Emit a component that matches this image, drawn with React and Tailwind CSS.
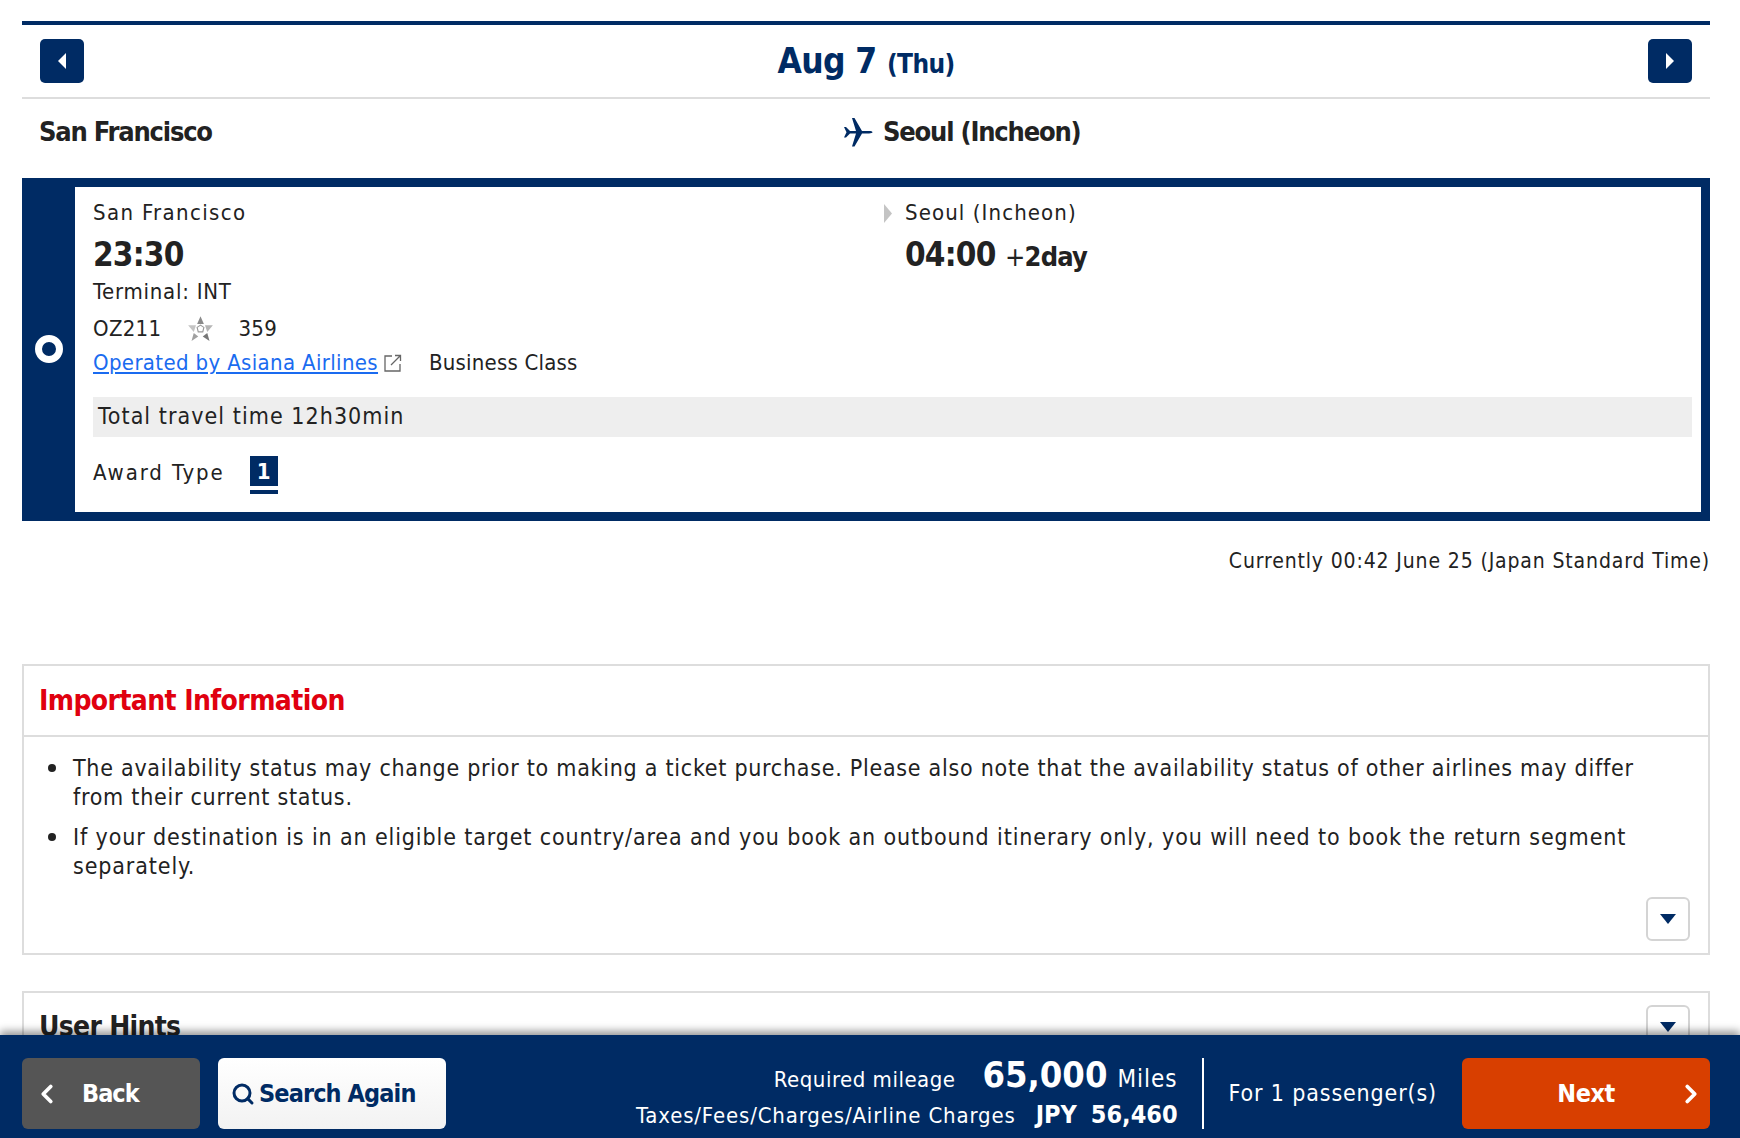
import React from "react";
import { ChevronLeft, ChevronRight, Search } from "lucide-react";

const Tri = ({ dir, className }) => {
  const points = {
    left: "9,0 9,16 1,8",
    right: "1,0 9,8 1,16",
  };
  return (
    <svg viewBox="0 0 10 16" className={className} fill="currentColor" preserveAspectRatio="none">
      <polygon points={points[dir]} />
    </svg>
  );
};

const ToggleButton = () => (
  <button className="w-[44px] h-[44px] rounded-[6px] border-2 border-[#d4d4d4] bg-white flex items-center justify-center shrink-0">
    <svg viewBox="0 0 16 10" className="w-[16px] h-[10px] text-[#002b64]" fill="currentColor">
      <polygon points="0,0 16,0 8,10" />
    </svg>
  </button>
);

const StarAlliance = () => (
  <svg viewBox="0 0 24 24" className="w-[27px] h-[27px]">
    <polygon points="12,1 15,8 9,8" fill="#8a8a8a" />
    <polygon points="16,9 23,9 18,15" fill="#b5b5b5" />
    <polygon points="18,16 20,23 14,19" fill="#777777" />
    <polygon points="10,19 4,23 6,16" fill="#a0a0a0" />
    <polygon points="1,9 8,9 6,15" fill="#c4c4c4" />
    <polygon points="12,9 15,11 14,15 10,15 9,11" fill="none" stroke="#999999" strokeWidth="1" />
  </svg>
);

const Plane = () => (
  <svg viewBox="0 0 30 30" className="w-[30px] h-[30px] text-[#002b64] mt-[-2px]" fill="currentColor">
    <path d="M1 10 L3 10 L7 14 L13 14 L9 1 L11.5 1 L19 14 L26 14 C28 14 29.5 14.6 29.5 15.2 C29.5 15.8 28 16.4 26 16.4 L19 16.4 L11.5 29.5 L9 29.5 L13 16.4 L7 16.4 L3 20.5 L1 20.5 L3.5 15.2 Z" />
  </svg>
);

const ExternalLink = () => (
  <svg viewBox="0 0 18 18" className="w-[18px] h-[18px] text-[#666666]" fill="none" stroke="currentColor" strokeWidth="1.3">
    <path d="M8 2 H1 V17 H16 V10" />
    <path d="M7 11 L16.5 1.5 M11 1.5 H16.5 V7" />
  </svg>
);

const Bullet = ({ children, className }) => (
  <li className="flex">
    <span className="w-[8px] h-[8px] mt-[10px] ml-[-25px] mr-[17px] rounded-full bg-[#222222] shrink-0" />
    <span className={className}>{children}</span>
  </li>
);

export default function App() {
  return (
    <div className="relative w-[1740px] h-[1138px] overflow-hidden bg-white text-[#222222] font-['DejaVu_Sans',sans-serif] [font-stretch:condensed]">
      <div className="pl-[22px] pr-[30px] pt-[21px]">
        {/* date */}
        <div className="border-t-4 border-b-2 border-t-[#002b64] border-b-[#dddddd] h-[78px] flex items-center justify-between px-[18px]">
          <button className="w-[44px] h-[44px] rounded-[5px] bg-[#002b64] text-white flex items-center justify-center">
            <Tri dir="left" className="w-[10px] h-[16px]" />
          </button>
          <div className="text-[#002b64] font-bold text-[35px] leading-none tracking-[-0.6px]">
            Aug 7 <span className="text-[26px]">(Thu)</span>
          </div>
          <button className="w-[44px] h-[44px] rounded-[5px] bg-[#002b64] text-white flex items-center justify-center">
            <Tri dir="right" className="w-[10px] h-[16px]" />
          </button>
        </div>

        {/* route */}
        <div className="h-[79px] pb-[12px] flex items-center pl-[17px] font-bold text-[27px] tracking-[-1.2px]">
          <div className="w-[804px]">San Francisco</div>
          <div className="flex items-center gap-[10px]">
            <Plane />
            <span>Seoul (Incheon)</span>
          </div>
        </div>

        {/* flight */}
        <div className="flex border-[9px] border-l-0 border-[#002b64] h-[343px]">
          <div className="w-[53px] bg-[#002b64] flex items-center justify-center shrink-0 pb-[2px]">
            <div className="w-[28px] h-[28px] rounded-full border-[7px] border-white" />
          </div>
          <div className="flex-1 pl-[18px] pr-[9px] pt-[12px] text-[22px]">
            <div className="flex">
              <div className="w-[790px]">
                <div className="h-[28px] leading-[28px] tracking-[1.35px]">San Francisco</div>
                <div className="mt-[5px] h-[45px] leading-[45px] font-bold text-[33px] tracking-[-0.8px]">23:30</div>
                <div className="h-[30px] leading-[30px] tracking-[0.75px]">Terminal: INT</div>
                <div className="mt-[3px] h-[37px] flex items-center tracking-[0.3px]">
                  <span>OZ211</span>
                  <span className="ml-[26px]"><StarAlliance /></span>
                  <span className="ml-[24px]">359</span>
                </div>
                <div className="h-[31px] flex items-center">
                  <a href="#" className="text-[#1a6bf0] underline tracking-[0.35px]">Operated by Asiana Airlines</a>
                  <span className="ml-[6px]"><ExternalLink /></span>
                  <span className="ml-[27px] tracking-[0.2px]">Business Class</span>
                </div>
              </div>
              <div>
                <div className="h-[28px] leading-[28px] flex items-center gap-[12px]">
                  <Tri dir="right" className="w-[10px] h-[19px] text-[#c4c4c4]" />
                  <span className="tracking-[1.1px]">Seoul (Incheon)</span>
                </div>
                <div className="mt-[5px] h-[45px] leading-[45px] font-bold text-[33px] tracking-[-0.8px] pl-[22px]">
                  04:00 <span className="text-[27px]"><span className="font-normal">+</span>2day</span>
                </div>
              </div>
            </div>
            <div className="mt-[19px] h-[40px] bg-[#eeeeee] flex items-center pl-[5px] text-[23px] tracking-[1.05px] pb-[2px]">Total travel time 12h30min</div>
            <div className="mt-[19px] flex items-start">
              <span className="h-[30px] leading-[34px] mr-[25px] tracking-[1.9px]">Award Type</span>
              <div>
                <div className="w-[28px] h-[30px] bg-[#002b64] text-white font-bold flex items-center justify-center text-[22px]">1</div>
                <div className="w-[28px] h-[4px] mt-[4px] bg-[#002b64]" />
              </div>
            </div>
          </div>
        </div>

        <div className="text-right text-[21px] mt-[26px] leading-[28px] tracking-[0.86px]">Currently 00:42 June 25 (Japan Standard Time)</div>

        {/* important */}
        <div className="mt-[89px] border-2 border-[#dddddd] h-[291px]">
          <div className="h-[71px] border-b-2 border-[#dddddd] flex items-center pl-[15px] text-[#e0000f] font-bold text-[28px] tracking-[-0.6px]">Important Information</div>
          <div className="pl-[49px] pr-[40px] pt-[17px] text-[23px] leading-[29px]">
            <ul className="flex flex-col gap-[11px]">
              <Bullet className="tracking-[0.73px]">The availability status may change prior to making a ticket purchase. Please also note that the availability status of other airlines may differ from their current status.</Bullet>
              <Bullet className="tracking-[0.88px]">If your destination is in an eligible target country/area and you book an outbound itinerary only, you will need to book the return segment separately.</Bullet>
            </ul>
          </div>
          <div className="flex justify-end pr-[18px] mt-[16px]"><ToggleButton /></div>
        </div>

        {/* hints */}
        <div className="mt-[36px] border-2 border-[#dddddd] h-[100px] flex justify-between pl-[15px] pr-[18px] pt-[12px]">
          <div className="font-bold text-[28px] leading-[44px] tracking-[-0.7px]">User Hints</div>
          <ToggleButton />
        </div>
      </div>

      {/* footer */}
      <div className="absolute left-0 bottom-0 w-full h-[103px] bg-[#002b64] shadow-[0_-4px_8px_rgba(0,0,0,0.4)] pl-[22px] pr-[30px] pt-[23px] flex text-white">
        <button className="w-[178px] h-[71px] rounded-[6px] bg-[#555555] flex items-center font-bold text-[25px] tracking-[-1px] pl-[10px]">
          <ChevronLeft className="w-[30px] h-[34px]" strokeWidth={3} />
          <span className="ml-[20px]">Back</span>
        </button>
        <button className="ml-[18px] w-[228px] h-[71px] rounded-[6px] bg-gradient-to-b from-white to-[#f2f2f2] text-[#002b64] flex items-center pl-[13px] gap-[4px] font-bold text-[25px] tracking-[-0.9px]">
          <Search className="w-[24px] h-[24px]" strokeWidth={3} />
          Search Again
        </button>
        <div className="ml-auto flex flex-col items-end mt-[-4px]">
          <div className="flex items-baseline h-[42px]">
            <span className="text-[22px] tracking-[0.5px]">Required mileage</span>
            <span className="ml-[27px] font-bold text-[36px] leading-[42px]">65,000</span>
            <span className="ml-[10px] text-[24px] tracking-[1px]">Miles</span>
          </div>
          <div className="flex items-baseline">
            <span className="text-[22px] tracking-[0.85px]">Taxes/Fees/Charges/Airline Charges</span>
            <span className="ml-[20px] font-bold text-[25px]">JPY</span>
            <span className="ml-[14px] font-bold text-[25px]">56,460</span>
          </div>
        </div>
        <div className="ml-[24px] w-[2px] h-[71px] bg-white" />
        <div className="ml-[25px] h-[71px] flex items-center text-[23px] tracking-[0.85px]">For 1 passenger(s)</div>
        <button className="relative ml-[25px] w-[248px] h-[71px] rounded-[6px] bg-[#d83f00] flex items-center justify-center font-bold text-[25px] tracking-[-0.5px]">
          Next
          <ChevronRight className="absolute right-[4px] w-[30px] h-[34px]" strokeWidth={3} />
        </button>
      </div>
    </div>
  );
}
